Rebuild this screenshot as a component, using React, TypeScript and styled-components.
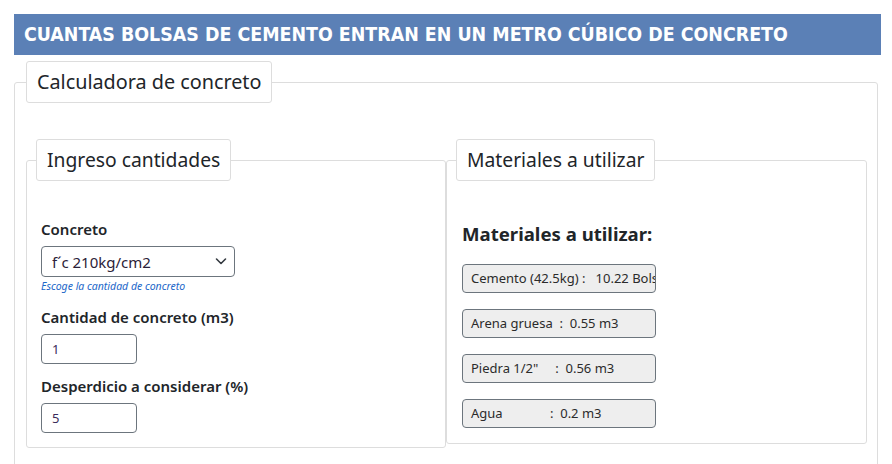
import React from "react";
import styled, { createGlobalStyle } from "styled-components";

const Global = createGlobalStyle`
  html, body { margin: 0; padding: 0; background: #fff; }
  body { font-family: "Noto Sans", "Open Sans", sans-serif; color: #212529; }
  * { box-sizing: border-box; }
`;

const Page = styled.div`
  padding: 14px 11px 0 14px;
  width: 892px;
  height: 464px;
  overflow: hidden;
`;

const Header = styled.h1`
  margin: 0;
  height: 41px;
  background: #5b80b6;
  color: #fff;
  font-family: "DejaVu Sans", sans-serif;
  font-stretch: condensed;
  font-weight: 700;
  font-size: 19.4px;
  line-height: 41px;
  padding-left: 10px;
  white-space: nowrap;
`;

const Outer = styled.fieldset`
  margin: 6px 3px 0 0;
  border: 1px solid #ddd;
  border-radius: 3px;
  padding: 36px 10px 30px 11px;
  min-width: 0;
`;

const Legend = styled.legend<{ $size?: number }>`
  border: 1px solid #ddd;
  border-radius: 3px;
  padding: 0 10px;
  height: 42px;
  line-height: 40px;
  font-size: ${(p) => p.$size ?? 19.8}px;
  font-weight: 400;
  color: #212529;
  background: #fff;
  white-space: nowrap;
`;

const Columns = styled.div`
  display: grid;
  grid-template-columns: 420px 421px;
  align-items: start;
`;

const Panel = styled.fieldset<{ $pb: number }>`
  margin: 0;
  border: 1px solid #ddd;
  border-radius: 3px;
  padding: 0 14px ${(p) => p.$pb}px 14px;
  min-width: 0;
`;

const PanelLegend = styled(Legend)`
  margin-left: -5px;
  font-size: 19.3px;
`;

const Form = styled.div`
  padding-top: 37px;
  display: flex;
  flex-direction: column;
`;

const Label = styled.label<{ $mt?: number }>`
  display: block;
  font-size: 15px;
  font-weight: 600;
  line-height: 22px;
  margin-top: ${(p) => p.$mt ?? 0}px;
  margin-bottom: 6px;
  color: #212529;
`;

const SelectWrap = styled.div`
  position: relative;
  width: 194px;
  height: 31px;
`;

const Select = styled.select`
  appearance: none;
  width: 100%;
  height: 100%;
  border: 1px solid #6c757d;
  border-radius: 4px;
  background: #fff;
  font-family: "Noto Sans", sans-serif;
  font-size: 15px;
  color: #2c2238;
  padding: 0 10px;
`;

const Chevron = styled.svg`
  position: absolute;
  right: 8px;
  top: 10px;
  pointer-events: none;
`;

const Help = styled.small`
  display: block;
  font-size: 10.5px;
  font-style: italic;
  color: #1b67c9;
  line-height: 16px;
  margin-top: 1px;
`;

const Input = styled.input`
  width: 96px;
  height: 30px;
  border: 1px solid #6c757d;
  border-radius: 4px;
  padding: 0 10px;
  font-family: "Noto Sans", sans-serif;
  font-size: 13px;
  color: #3a2a5a;
`;

const Results = styled.div`
  padding-top: 38px;
  display: flex;
  flex-direction: column;
  gap: 16px;
  padding-left: 1px;
`;

const ResultsTitle = styled.h3`
  margin: 0 0 -1px;
  font-size: 18.6px;
  font-weight: 700;
  line-height: 30px;
  color: #212529;
  white-space: nowrap;
`;

const ResultBox = styled.div`
  width: 194px;
  height: 29px;
  border: 1px solid #6c757d;
  border-radius: 4px;
  background: #eeeeee;
  font-size: 13px;
  color: #2b2b2b;
  line-height: 27px;
  padding-left: 8px;
  white-space: pre;
  overflow: hidden;
`;

const results = [
  "Cemento (42.5kg) :   10.22 Bolsas",
  "Arena gruesa  :  0.55 m3",
  'Piedra 1/2"     :  0.56 m3',
  "Agua              :  0.2 m3",
];

export default function App() {
  return (
    <Page>
      <Global />
      <Header>CUANTAS BOLSAS DE CEMENTO ENTRAN EN UN METRO CÚBICO DE CONCRETO</Header>
      <Outer>
        <Legend>Calculadora de concreto</Legend>
        <Columns>
          <Panel $pb={14}>
            <PanelLegend>Ingreso cantidades</PanelLegend>
            <Form>
              <Label>Concreto</Label>
              <SelectWrap>
                <Select defaultValue="210">
                  <option value="210">f´c 210kg/cm2</option>
                </Select>
                <Chevron width="12" height="10" viewBox="0 0 12 10">
                  <path d="M1.5 3 L6 7.5 L10.5 3" fill="none" stroke="#343a40" strokeWidth="1.6" strokeLinecap="round" strokeLinejoin="round" />
                </Chevron>
              </SelectWrap>
              <Help>Escoge la cantidad de concreto</Help>
              <Label $mt={12}>Cantidad de concreto (m3)</Label>
              <Input defaultValue="1" />
              <Label $mt={11}>Desperdicio a considerar (%)</Label>
              <Input defaultValue="5" />
            </Form>
          </Panel>
          <Panel $pb={15}>
            <PanelLegend>Materiales a utilizar</PanelLegend>
            <Results>
              <ResultsTitle>Materiales a utilizar:</ResultsTitle>
              {results.map((r) => (
                <ResultBox key={r}>{r}</ResultBox>
              ))}
            </Results>
          </Panel>
        </Columns>
      </Outer>
    </Page>
  );
}
